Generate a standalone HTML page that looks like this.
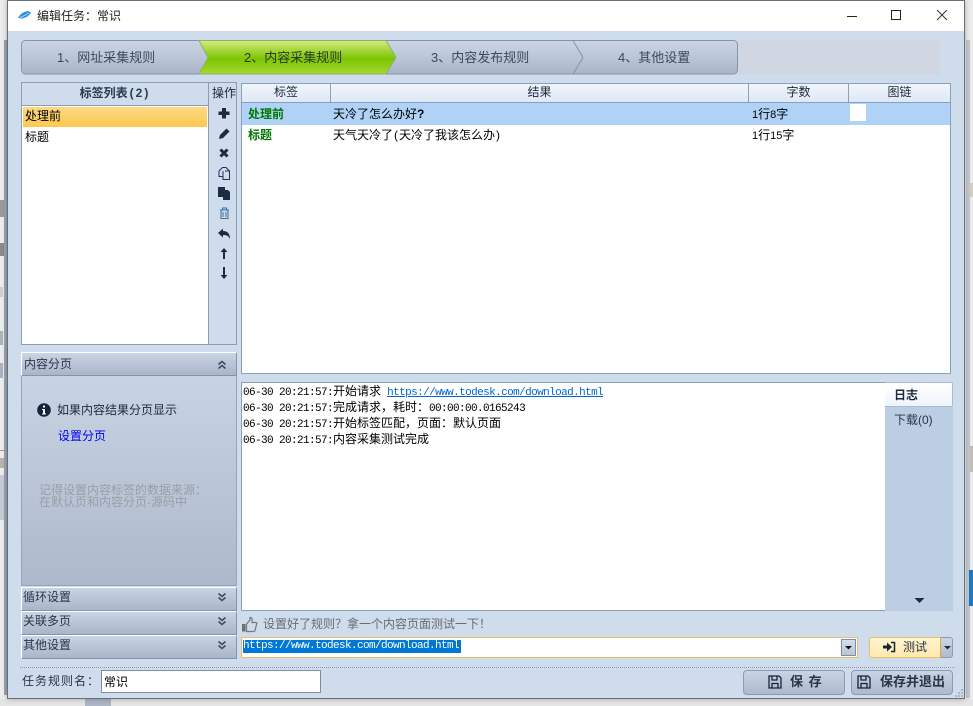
<!DOCTYPE html>
<html><head><meta charset="utf-8">
<style>
html,body{margin:0;padding:0;width:973px;height:706px;overflow:hidden;background:#ececec}
*{box-sizing:border-box}
body{font-family:"Liberation Sans","WenQuanYi Zen Hei","Noto Sans CJK SC",sans-serif;font-size:12px;color:#1c2a3c;position:relative}
.a{position:absolute}
.t{position:absolute;white-space:nowrap;line-height:16px}
.m{font-family:"Liberation Mono",monospace;font-size:11px;letter-spacing:-.6px;color:#000}
.m b{font-family:"WenQuanYi Zen Hei","Noto Sans CJK SC",sans-serif;font-size:12px;font-weight:normal;letter-spacing:0}
.d{font-size:11px}
.p{margin:0 1px}
.hd{position:absolute;background:linear-gradient(#c9d4e4,#a9b6c9);border:1px solid #8494ab;border-top-color:#fff;border-left-color:#fff}
.th{position:absolute;top:84px;height:18px;background:linear-gradient(#f0f5fc,#dfe8f6);border-right:1px solid #8aa0bc;text-align:center;line-height:17px;font-size:12px;color:#1c2a3c}
</style></head><body>
<!-- background fragments -->
<div class="a" style="left:0;top:0;width:7px;height:706px;background:#ededed"></div>
<div class="a" style="left:4px;top:40px;width:3px;height:655px;background:#9aa5b3"></div>
<div class="a" style="left:0;top:200px;width:4px;height:17px;background:#9a9a9a"></div>
<div class="a" style="left:0;top:243px;width:4px;height:13px;background:#8a8a8a"></div>
<div class="a" style="left:0;top:287px;width:3px;height:10px;background:#cfcfcf"></div>
<div class="a" style="left:0;top:331px;width:3px;height:14px;background:#a9b4bf"></div>
<div class="a" style="left:0;top:363px;width:3px;height:15px;background:#a8b2c0"></div>
<div class="a" style="left:0;top:450px;width:4px;height:1px;background:#999"></div>
<div class="a" style="left:0;top:458px;width:4px;height:10px;background:#b5b5ad"></div>
<div class="a" style="left:0;top:475px;width:4px;height:45px;background:#c6ccd6"></div>
<div class="a" style="left:965px;top:40px;width:8px;height:666px;background:#ececec"></div>
<div class="a" style="left:966px;top:40px;width:4px;height:658px;background:#c2c7ce"></div>
<div class="a" style="left:969px;top:570px;width:4px;height:36px;background:#1d78c1"></div>
<div class="a" style="left:970px;top:183px;width:3px;height:14px;background:#d4ccbe"></div>
<div class="a" style="left:970px;top:446px;width:3px;height:26px;background:#c2bcb4"></div>
<div class="a" style="left:0;top:699px;width:973px;height:7px;background:#e4e4e4"></div>
<div class="a" style="left:85px;top:698px;width:26px;height:8px;background:#aab5c5"></div>
<!-- window -->
<div class="a" style="left:7px;top:0;width:958px;height:699px;background:#cfdcec;border:1px solid #6a6f76;box-shadow:0 0 5px rgba(0,0,0,.28)"></div>
<div class="a" style="left:8px;top:1px;width:956px;height:30px;background:#fff"></div>
<svg class="a" style="left:17px;top:10px" width="15" height="10" viewBox="0 0 15 10"><path d="M1 8 C3 4 6 2 11 1 L14 2.500 C12.500 5.500 9 8 4.500 8.500 Z" fill="#2f8fdc"/><path d="M3 7.500 C6 6.500 9 5 12 3" stroke="#a9d6f7" fill="none"/></svg>
<div class="t" style="left:37px;top:8px;font-size:12px;color:#222">编辑任务：常识</div>
<svg class="a" style="left:840px;top:6px" width="124" height="20" viewBox="0 0 124 20"><path d="M7 10.500H17" stroke="#222" fill="none"/><rect x="51.500" y="4.500" width="9" height="9" stroke="#222" fill="none"/><path d="M97 4L107 14M107 4L97 14" stroke="#333" fill="none"/></svg>
<!-- tabs -->
<div class="a" style="left:738px;top:40px;width:202px;height:35px;background:#d0d6e2"></div>
<svg class="a" style="left:21px;top:40px" width="718" height="35" viewBox="0 0 718 35">
<defs>
<linearGradient id="g" x1="0" y1="0" x2="0" y2="1"><stop offset="0" stop-color="#ccd5e4"/><stop offset="1" stop-color="#a9b6c9"/></linearGradient>
<linearGradient id="gr" x1="0" y1="0" x2="0" y2="1"><stop offset="0" stop-color="#d3ec7e"/><stop offset=".55" stop-color="#7cc402"/><stop offset="1" stop-color="#a5d82f"/></linearGradient>
</defs>
<rect x=".5" y=".5" width="716" height="33.500" rx="4" fill="url(#g)" stroke="#8494ab"/>
<path d="M178 .5H365L375 17.500L365 34H178L187 17.500Z" fill="url(#gr)" stroke="#8eb06a"/>
<path d="M552 .5L562 17.500L552 34" fill="none" stroke="#8494ab"/>
</svg>
<div class="t" style="left:57px;top:50px;font-size:13px;color:#3c4a5e">1、网址采集规则</div>
<div class="t" style="left:244px;top:50px;font-size:13px;color:#2a3a2a">2、内容采集规则</div>
<div class="t" style="left:431px;top:50px;font-size:13px;color:#3c4a5e">3、内容发布规则</div>
<div class="t" style="left:618px;top:50px;font-size:13px;color:#3c4a5e">4、其他设置</div>
<!-- tag list -->
<div class="a" style="left:21px;top:82px;width:188px;height:263px;border:1px solid #8c9cb2;background:#fff"></div>
<div class="a" style="left:22px;top:83px;width:186px;height:23px;background:#cfdcec;border-bottom:1px solid #8c9cb2;text-align:center;line-height:21px;font-weight:bold;font-size:12px;color:#2a3a50">标签列表<span style="letter-spacing:2px;margin-left:2px">(2)</span></div>
<div class="a" style="left:23px;top:107px;width:184px;height:20px;background:linear-gradient(#fdd983,#fcc84f)"></div>
<div class="t" style="left:25px;top:108px;color:#000">处理前</div>
<div class="t" style="left:25px;top:129px;color:#000">标题</div>
<!-- ops -->
<div class="a" style="left:208px;top:82px;width:29px;height:263px;border:1px solid #8c9cb2;background:#cfdcec"></div>
<div class="t" style="left:212px;top:85px;font-size:12px">操作</div>
<svg class="a" style="left:216px;top:100px" width="16" height="182" viewBox="0 0 16 182" fill="#1c2a44">
<path d="M6 8h4v3.500h3.500v3.500H10v3.500H6V15H2.500v-3.500H6z"/>
<path d="M3 39l1-4 6.500-6.500 3 3L7 38z"/>
<path d="M4.500 49.500L11.500 56.500M11.500 49.500L4.500 56.500" fill="none" stroke="#1c2a44" stroke-width="3"/>
<path d="M6.500 67.500h3.500l3.500 3.500v8.500H7v-3H3v-5.500zM7 76V71M9 71h4" fill="none" stroke="#2e2a60"/>
<path d="M2 87h7v3h3l2 2v8H7v-3H2z"/>
<path d="M4 110h9M6.500 110v-2h4v2M5 110.500v8h7v-8M7 112v5M10 112v5" fill="none" stroke="#3f6f9f"/>
<path d="M2 133l5-4.500v2.500c4 0 7 2 7 8c-1.500-3-3-4-7-4v2.500z"/>
<path d="M8 148l3.500 4H9v7H7v-7H4.500z"/>
<path d="M7 167h2v8h2.500L8 179l-3.500-4H7z"/>
</svg>
<!-- content paging -->
<div class="hd" style="left:21px;top:352px;width:216px;height:24px"></div>
<div class="t" style="left:24px;top:356px;color:#2a3648">内容分页</div>
<svg class="a" style="left:216px;top:359px" width="12" height="12" viewBox="0 0 12 12" fill="none" stroke="#3c4a5e" stroke-width="1.500"><path d="M2.500 5.500L6 2.500L9.500 5.500M2.500 9.500L6 6.500L9.500 9.500"/></svg>
<div class="a" style="left:21px;top:376px;width:216px;height:210px;background:linear-gradient(#c8d3e3,#adb9cb);border:1px solid #95a4b9;border-top:none"></div>
<svg class="a" style="left:37px;top:403px" width="14" height="14" viewBox="0 0 14 14"><circle cx="7" cy="7" r="6.800" fill="#15233c"/><rect x="6" y="2.500" width="2" height="2" fill="#fff"/><path d="M5 6h3v4.500h1v1H5v-1h1V7H5z" fill="#fff"/></svg>
<div class="t" style="left:57px;top:402px">如果内容结果分页显示</div>
<div class="t" style="left:58px;top:428px;color:#0000f0">设置分页</div>
<div class="t" style="left:39px;top:484px;color:#9a9ea6;line-height:12px">记得设置内容标签的数据来源：<br>在默认页和内容分页-源码中</div>
<!-- accordion -->
<div class="hd" style="left:21px;top:587px;width:216px;height:24px"></div>
<div class="t" style="left:23px;top:589px;color:#2a3648">循环设置</div>
<div class="hd" style="left:21px;top:611px;width:216px;height:24px"></div>
<div class="t" style="left:23px;top:613px;color:#2a3648">关联多页</div>
<div class="hd" style="left:21px;top:635px;width:216px;height:24px"></div>
<div class="t" style="left:23px;top:637px;color:#2a3648">其他设置</div>
<svg class="a" style="left:216px;top:592px" width="12" height="60" viewBox="0 0 12 60" fill="none" stroke="#3c4a5e" stroke-width="1.500"><path d="M2.500 1.500L6 4.500L9.500 1.500M2.500 5.500L6 8.500L9.500 5.500M2.500 25.500L6 28.500L9.500 25.500M2.500 29.500L6 32.500L9.500 29.500M2.500 49.500L6 52.500L9.500 49.500M2.500 53.500L6 56.500L9.500 53.500"/></svg>
<!-- table -->
<div class="a" style="left:241px;top:83px;width:710px;height:291px;background:#fff;border:1px solid #8aa0bc"></div>
<div class="th" style="left:242px;width:89px">标签</div>
<div class="th" style="left:331px;width:418px">结果</div>
<div class="th" style="left:749px;width:100px">字数</div>
<div class="th" style="left:849px;width:101px;border-right:none">图链</div>
<div class="a" style="left:242px;top:102px;width:708px;height:1px;background:#8aa0bc"></div>
<div class="a" style="left:242px;top:103px;width:708px;height:22px;background:#afd2f6"></div>
<div class="a" style="left:850px;top:104px;width:16px;height:17px;background:#fff"></div>
<div class="t" style="left:248px;top:106px;color:#007800;font-weight:bold">处理前</div>
<div class="t" style="left:248px;top:127px;color:#007800;font-weight:bold">标题</div>
<div class="t" style="left:333px;top:106px;color:#000">天冷了怎么办好<b>?</b></div>
<div class="t" style="left:333px;top:127px;color:#000">天气天冷了<span class="p">(</span>天冷了我该怎么办<span class="p">)</span></div>
<div class="t" style="left:752px;top:106px;color:#000"><span class="d">1</span>行<span class="d">8</span>字</div>
<div class="t" style="left:752px;top:127px;color:#000"><span class="d">1</span>行<span class="d">15</span>字</div>
<!-- log -->
<div class="a" style="left:241px;top:382px;width:645px;height:229px;background:#fff;border:1px solid #8aa0bc"></div>
<div class="t m" style="left:243px;top:383px">06-30 20:21:57:<b>开始请求</b> <span style="color:#0066cc;text-decoration:underline">https://www.todesk.com/download.html</span></div>
<div class="t m" style="left:243px;top:399px">06-30 20:21:57:<b>完成请求，耗时：</b>00:00:00.0165243</div>
<div class="t m" style="left:243px;top:415px">06-30 20:21:57:<b>开始标签匹配，页面：默认页面</b></div>
<div class="t m" style="left:243px;top:431px">06-30 20:21:57:<b>内容采集测试完成</b></div>
<div class="a" style="left:885px;top:407px;width:68px;height:204px;background:#bbcee4"></div>
<div class="a" style="left:885px;top:382px;width:68px;height:25px;background:linear-gradient(#fff,#eef4fc);border:1px solid #a9bbd2;border-radius:0 2px 2px 0;border-left:none"></div>
<div class="t" style="left:894px;top:387px;font-weight:bold;color:#1c2a3c">日志</div>
<div class="t" style="left:894px;top:412px;color:#2a3648">下载(0)</div>
<svg class="a" style="left:914px;top:598px" width="12" height="6" viewBox="0 0 12 6"><path d="M0.500 0H10.500L5.500 5z" fill="#1c2a44"/></svg>
<!-- hint -->
<svg class="a" style="left:241px;top:616px" width="17" height="17" viewBox="0 0 17 17"><path d="M1 8h3.500v7.500H1z" fill="#6f6f6f"/><path d="M5.500 8L9 4V1.500c2 0 2.500 1.500 2 5h4c1 0 1 1 .5 2l-1.500 6c-.3 1-1 1-2 1H5.500z" fill="none" stroke="#74787e" stroke-width="1.200"/></svg>
<div class="t" style="left:263px;top:616px;color:#666c75">设置好了规则？拿一个内容页面测试一下！</div>
<!-- url input -->
<div class="a" style="left:241px;top:637px;width:617px;height:21px;background:#fff;border:1px solid #e5bf6e"></div>
<div class="a" style="left:243px;top:640px;width:218px;height:13px;background:#0078d7"></div>
<div class="t m" style="left:243px;top:638px;color:#fff">https://www.todesk.com/download.html</div>
<div class="a" style="left:841px;top:639px;width:15px;height:17px;background:linear-gradient(#d6dfeb,#b8c5d6);border:1px solid #7f8ea3"></div>
<svg class="a" style="left:845px;top:646px" width="8" height="4" viewBox="0 0 8 4"><path d="M0 0H7L3.500 3.500z" fill="#111"/></svg>
<!-- test button -->
<div class="a" style="left:869px;top:637px;width:72px;height:21px;background:linear-gradient(#fff4d0,#ffe9ad);border:1px solid #e5bf6e;border-right:1px solid #dca93e;border-radius:3px 0 0 3px"></div>
<div class="a" style="left:941px;top:637px;width:12px;height:21px;background:linear-gradient(#ccd6e4,#aebbcd);border:1px solid #8c9cb2;border-left:none;border-radius:0 3px 3px 0"></div>
<svg class="a" style="left:944px;top:646px" width="8" height="4" viewBox="0 0 8 4"><path d="M0 0H7L3.500 3.500z" fill="#1c2a44"/></svg>
<svg class="a" style="left:883px;top:641px" width="13" height="12" viewBox="0 0 13 12"><path d="M0 4.500H4V1.500L9 6L4 10.500V7.500H0z" fill="#15233c"/><path d="M8 1.500H11.500V10.500H8" fill="none" stroke="#15233c" stroke-width="1.500"/></svg>
<div class="t" style="left:903px;top:639px;color:#2a3040">测试</div>
<!-- bottom -->
<div class="a" style="left:20px;top:667px;width:935px;border-top:1px dotted #8f99a8"></div>
<div class="t" style="left:22px;top:673px;color:#2a3648;letter-spacing:1px">任务规则名：</div>
<div class="a" style="left:101px;top:670px;width:220px;height:23px;background:#fff;border:1px solid #7f8ea3"></div>
<div class="t" style="left:104px;top:674px;color:#000">常识</div>
<div class="a" style="left:743px;top:670px;width:102px;height:25px;background:linear-gradient(#c9d4e4,#adb9cc);border:1px solid #8c9cb2;border-radius:4px"></div>
<div class="a" style="left:851px;top:670px;width:102px;height:25px;background:linear-gradient(#c9d4e4,#adb9cc);border:1px solid #8c9cb2;border-radius:4px"></div>
<svg class="a" style="left:768px;top:675px" width="14" height="14" viewBox="0 0 14 14" fill="none" stroke="#15233c" stroke-width="1.300"><path d="M1 1H11L13 3V13H1Z"/><path d="M4 1V5H9V1M4 13V8.500H10V13"/></svg>
<div class="t" style="left:790px;top:674px;font-weight:bold;font-size:13px;color:#2a3648;letter-spacing:1px">保 存</div>
<svg class="a" style="left:857px;top:675px" width="14" height="14" viewBox="0 0 14 14" fill="none" stroke="#15233c" stroke-width="1.300"><path d="M1 1H11L13 3V13H1Z"/><path d="M4 1V5H9V1M4 13V8.500H10V13"/></svg>
<div class="t" style="left:880px;top:674px;font-weight:bold;font-size:13px;color:#2a3648">保存并退出</div>
<!-- resize grip -->
<svg class="a" style="left:955px;top:689px" width="9" height="9" viewBox="0 0 9 9" fill="#a9b4c4"><rect x="6" y="0" width="2" height="2"/><rect x="3" y="3" width="2" height="2"/><rect x="6" y="3" width="2" height="2"/><rect x="0" y="6" width="2" height="2"/><rect x="3" y="6" width="2" height="2"/><rect x="6" y="6" width="2" height="2"/></svg>
</body></html>
